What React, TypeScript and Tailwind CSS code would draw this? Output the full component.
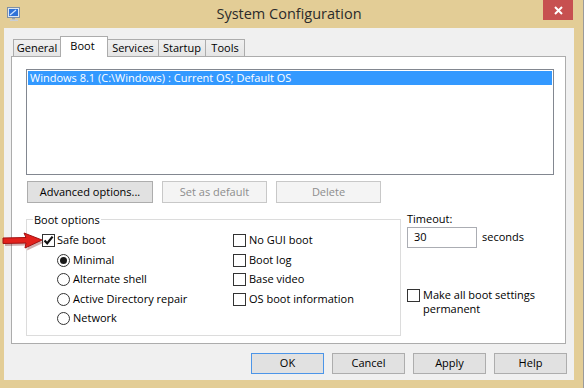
import React from 'react';

const font = "font-['Segoe_UI','Open_Sans',sans-serif]";

function CheckBox({ checked = false }: { checked?: boolean }) {
  return (
    <span className="w-[13px] h-[13px] shrink-0 border border-[#333333] bg-white flex items-center justify-center">
      {checked && (
        <svg width="11" height="11" viewBox="0 0 11 11">
          <path d="M1.5 5.5 L4.2 8.3 L9.6 1.6" fill="none" stroke="#111" strokeWidth="2.2" />
        </svg>
      )}
    </span>
  );
}

function Radio({ on = false }: { on?: boolean }) {
  return (
    <span className="w-[13px] h-[13px] shrink-0 rounded-full border border-[#333333] bg-white flex items-center justify-center">
      {on && <span className="w-[7px] h-[7px] rounded-full bg-[#1a1a1a]" />}
    </span>
  );
}

function Row({ h, children }: { h: string; children: React.ReactNode }) {
  return <div className={`flex items-center ${h}`}>{children}</div>;
}

const tabs = [
  { label: 'General', w: 'w-[48px]' },
  { label: 'Boot', w: 'w-[48px]', active: true },
  { label: 'Services', w: 'w-[52px]' },
  { label: 'Startup', w: 'w-[48px]' },
  { label: 'Tools', w: 'w-[40px]' },
];

export default function App() {
  return (
    <div className={`relative w-[584px] h-[388px] bg-[#e3cd96] border-r border-[#9a9a9a] flex flex-col text-[11px] text-black ${font}`}>
      {/* title bar */}
      <div className="h-[28px] flex items-start shrink-0">
        <div className="w-[41px] h-[28px] pl-[7px] pt-[7px]">
          <svg width="14" height="14" viewBox="0 0 14 14">
            <rect x="0.5" y="0.5" width="12" height="10" fill="#dfe6ee" stroke="#7f8fa3" />
            <rect x="2" y="2" width="9" height="7" fill="#2f72d8" />
            <path d="M3 8 L9 3" stroke="#cfe4ff" strokeWidth="1.2" />
            <rect x="5" y="11" width="3" height="1.5" fill="#9aa5b1" />
            <rect x="3" y="12.5" width="8" height="1.5" fill="#c9ced4" />
          </svg>
        </div>
        <div className="flex-1 h-[28px] flex items-center justify-center pr-[6px] text-[14.5px] text-[#2b2b2b]">
          System Configuration
        </div>
        <div className="w-[40px] h-[28px]">
          <div className="w-[30px] h-[20px] bg-[#c75050] flex items-center justify-center">
            <svg width="9" height="9" viewBox="0 0 9 9">
              <path d="M1 1 L8 8 M8 1 L1 8" stroke="#fff" strokeWidth="2" />
            </svg>
          </div>
        </div>
      </div>

      {/* client */}
      <div className="flex-1 ml-[4px] mr-[9px] mb-[8px] bg-[#f0f0f0] pt-[8px] px-[7px] flex flex-col">
        {/* tab strip */}
        <div className="h-[20px] flex items-end pl-[2px]">
          {tabs.map((t) =>
            t.active ? (
              <div
                key={t.label}
                className={`relative z-10 ${t.w} -ml-px h-[21px] -mb-px bg-white border border-b-0 border-[#acacac] flex items-center justify-center pb-[2px] pr-[3px]`}
              >
                {t.label}
              </div>
            ) : (
              <div
                key={t.label}
                className={`${t.w} -ml-px first:ml-0 h-[17px] bg-gradient-to-b from-[#f0f0f0] to-[#e5e5e5] border border-b-0 border-[#acacac] flex items-center justify-center`}
              >
                {t.label}
              </div>
            ),
          )}
        </div>

        {/* panel */}
        <div className="h-[288px] mr-[1px] bg-white border border-[#acacac] pt-[12px] pl-[14px] pr-[11px] flex flex-col">
          <div className="h-[106px] border border-[#828790] p-[1px] bg-white">
            <div className="h-[14px] bg-[#3399ff] text-white pl-[2px] leading-[14px]">
              Windows 8.1 (C:\Windows) : Current OS; Default OS
            </div>
          </div>

          <div className="mt-[6px] ml-[1px] flex gap-[9px]">
            <div className="w-[126px] h-[22px] bg-[#e1e1e1] border border-[#adadad] flex items-center justify-center">
              Advanced options...
            </div>
            <div className="w-[105px] h-[22px] bg-[#f4f4f4] border border-[#c8c8c8] text-[#8d8d8d] flex items-center justify-center">
              Set as default
            </div>
            <div className="w-[105px] h-[22px] bg-[#f4f4f4] border border-[#c8c8c8] text-[#8d8d8d] flex items-center justify-center">
              Delete
            </div>
          </div>

          <div className="flex items-start">
            {/* group box */}
            <div className="relative mt-[16px] w-[375px] h-[117px] border border-[#dcdcdc] pt-[11px] pl-[15px] flex">
              <span className="absolute -top-[8px] left-[6px] bg-white px-[1px] leading-[15px]">Boot options</span>
              <div className="w-[191px] flex flex-col">
                <Row h="h-[19px]">
                  <CheckBox checked />
                  <span className="ml-[2px]">Safe boot</span>
                </Row>
                <Row h="h-[20px] pl-[15px]">
                  <Radio on />
                  <span className="ml-[3px]">Minimal</span>
                </Row>
                <Row h="h-[19px] pl-[15px]">
                  <Radio />
                  <span className="ml-[3px]">Alternate shell</span>
                </Row>
                <Row h="h-[20px] pl-[15px]">
                  <Radio />
                  <span className="ml-[3px]">Active Directory repair</span>
                </Row>
                <Row h="h-[19px] pl-[15px]">
                  <Radio />
                  <span className="ml-[3px]">Network</span>
                </Row>
              </div>
              <div className="flex flex-col">
                <Row h="h-[19px]">
                  <CheckBox />
                  <span className="ml-[3px]">No GUI boot</span>
                </Row>
                <Row h="h-[20px]">
                  <CheckBox />
                  <span className="ml-[3px]">Boot log</span>
                </Row>
                <Row h="h-[19px]">
                  <CheckBox />
                  <span className="ml-[3px]">Base video</span>
                </Row>
                <Row h="h-[20px]">
                  <CheckBox />
                  <span className="ml-[3px]">OS boot information</span>
                </Row>
              </div>
            </div>

            {/* timeout column */}
            <div className="ml-[6px] flex flex-col">
              <div className="mt-[8px] h-[15px] leading-[15px]">Timeout:</div>
              <div className="mt-[1px] flex items-center">
                <div className="w-[70px] h-[21px] border border-[#abadb3] bg-white pl-[6px] flex items-center">30</div>
                <span className="ml-[5px]">seconds</span>
              </div>
              <div className="mt-[40px] flex items-start">
                <span className="mt-[1px]">
                  <CheckBox />
                </span>
                <span className="ml-[3px] leading-[14px]">
                  Make all boot settings
                  <br />
                  permanent
                </span>
              </div>
            </div>
          </div>
        </div>

        {/* dialog buttons */}
        <div className="mt-[9px] flex justify-end gap-[8px]">
          <div className="w-[73px] h-[21px] bg-[#e1e1e1] border border-[#4c95e8] flex items-center justify-center">OK</div>
          <div className="w-[73px] h-[21px] bg-[#e1e1e1] border border-[#adadad] flex items-center justify-center">Cancel</div>
          <div className="w-[73px] h-[21px] bg-[#e1e1e1] border border-[#adadad] flex items-center justify-center">Apply</div>
          <div className="w-[73px] h-[21px] bg-[#e1e1e1] border border-[#adadad] flex items-center justify-center">Help</div>
        </div>
      </div>

      {/* red pointer arrow */}
      <svg className="absolute left-[1px] top-[231px]" width="44" height="20" viewBox="0 0 44 20">
        <path d="M3 8 L26 7.5 L24 3 L42 10 L25 18 L26 13 L3 13.5 Z" fill="#7a1a1a" opacity="0.35" transform="translate(1 1.5)" />
        <path d="M2 7 L25 6.5 L23 2 L41 9 L24 17 L25 12 L2 12.5 Z" fill="#e3211c" stroke="#a01212" strokeWidth="1" strokeLinejoin="round" />
      </svg>
    </div>
  );
}
